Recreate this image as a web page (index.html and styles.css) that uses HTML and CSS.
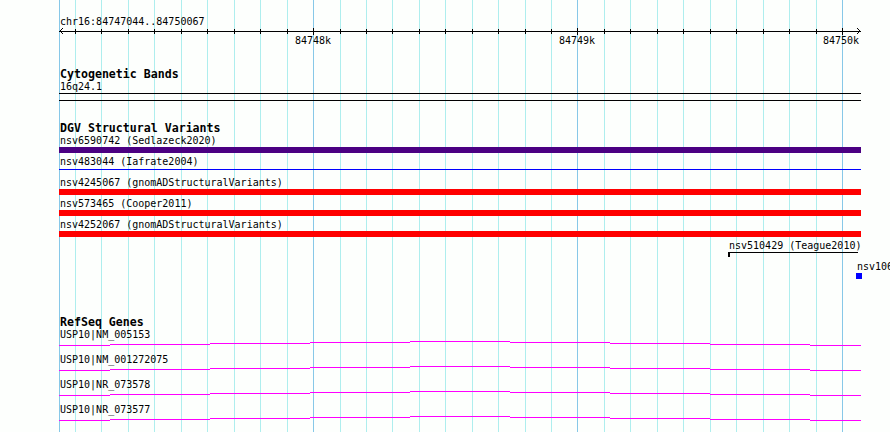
FILE: index.html
```html
<!DOCTYPE HTML>
<html lang="en-US">
<head>
	<meta charset="UTF-8" />
	<title>chr16:84747044..84750067</title>
	<link rel="stylesheet" href="styles.css">
</head>
<body>

	<svg class="grid" width="890" height="432" viewBox="0 0 890 432">
		<path class="grid-minor" d="M75.5 0V432M101.5 0V432M128.5 0V432M154.5 0V432M181.5 0V432M207.5 0V432M234.5 0V432M260.5 0V432M287.5 0V432M340.5 0V432M366.5 0V432M392.5 0V432M419.5 0V432M445.5 0V432M472.5 0V432M498.5 0V432M525.5 0V432M551.5 0V432M604.5 0V432M630.5 0V432M657.5 0V432M683.5 0V432M710.5 0V432M736.5 0V432M763.5 0V432M789.5 0V432M816.5 0V432" />
		<path class="grid-major" d="M59.5 0V432M313.5 0V432M577.5 0V432M842.5 0V432" />
	</svg>

	<svg class="ruler" width="890" height="48" viewBox="0 0 890 48">
		<text class="ruler-text" x="60" y="25">chr16:84747044..84750067</text>
		<path class="ruler-line" d="M59 31.5H861M63 28L60 31L63 34M857 28L860 31L857 34" />
		<path class="ruler-line" d="M75.5 29V34M101.5 29V34M128.5 29V34M154.5 29V34M181.5 29V34M207.5 29V34M234.5 29V34M260.5 29V34M287.5 29V34M340.5 29V34M366.5 29V34M392.5 29V34M419.5 29V34M445.5 29V34M472.5 29V34M498.5 29V34M525.5 29V34M551.5 29V34M604.5 29V34M630.5 29V34M657.5 29V34M683.5 29V34M710.5 29V34M736.5 29V34M763.5 29V34M789.5 29V34M816.5 29V34" />
		<path class="ruler-line" d="M313.5 28V35M577.5 28V35M842.5 28V35" />
		<text class="ruler-text" x="313" y="44" text-anchor="middle">84748k</text>
		<text class="ruler-text" x="577" y="44" text-anchor="middle">84749k</text>
		<text class="ruler-text" x="841" y="44" text-anchor="middle">84750k</text>
	</svg>

	<section class="track cyto">
		<h2 class="track-title">Cytogenetic Bands</h2>
		<div class="label">16q24.1</div>
		<div class="band"></div>
	</section>

	<section class="track dgv">
		<h2 class="track-title">DGV Structural Variants</h2>
		<div class="feature">
			<div class="label">nsv6590742 (Sedlazeck2020)</div>
			<div class="glyph bar-indigo"></div>
		</div>
		<div class="feature">
			<div class="label">nsv483044 (Iafrate2004)</div>
			<div class="glyph"><div class="stroke stroke-blue"></div></div>
		</div>
		<div class="feature">
			<div class="label">nsv4245067 (gnomADStructuralVariants)</div>
			<div class="glyph bar-red"></div>
		</div>
		<div class="feature">
			<div class="label">nsv573465 (Cooper2011)</div>
			<div class="glyph bar-red"></div>
		</div>
		<div class="feature">
			<div class="label">nsv4252067 (gnomADStructuralVariants)</div>
			<div class="glyph bar-red"></div>
		</div>
		<div class="feature" style="margin-left:669px;width:130px">
			<div class="label">nsv510429 (Teague2010)</div>
			<div class="glyph"><div class="end-tick"><div class="stroke"></div></div></div>
		</div>
		<div class="feature" style="margin-left:797px;width:6px">
			<div class="label">nsv106</div>
			<div class="glyph bar-blue"></div>
		</div>
	</section>

	<section class="track refseq">
		<h2 class="track-title">RefSeq Genes</h2>
		<div class="gene">
			<div class="label">USP10|NM_005153</div>
			<svg class="gene-line" width="802" height="14" viewBox="0 0 802 14"><path d="M0 5.5H51M51 4.5H151M151 3.5H251M251 2.5H351M351 1.5H451M451 2.5H551M551 3.5H651M651 4.5H751M751 5.5H802" /></svg>
		</div>
		<div class="gene">
			<div class="label">USP10|NM_001272075</div>
			<svg class="gene-line" width="802" height="14" viewBox="0 0 802 14"><path d="M0 5.5H51M51 4.5H151M151 3.5H251M251 2.5H351M351 1.5H451M451 2.5H551M551 3.5H651M651 4.5H751M751 5.5H802" /></svg>
		</div>
		<div class="gene">
			<div class="label">USP10|NR_073578</div>
			<svg class="gene-line" width="802" height="14" viewBox="0 0 802 14"><path d="M0 5.5H51M51 4.5H151M151 3.5H251M251 2.5H351M351 1.5H451M451 2.5H551M551 3.5H651M651 4.5H751M751 5.5H802" /></svg>
		</div>
		<div class="gene">
			<div class="label">USP10|NR_073577</div>
			<svg class="gene-line" width="802" height="14" viewBox="0 0 802 14"><path d="M0 5.5H51M51 4.5H151M151 3.5H251M251 2.5H351M351 1.5H451M451 2.5H551M551 3.5H651M651 4.5H751M751 5.5H802" /></svg>
		</div>
	</section>

</body>
</html>
```

FILE: styles.css
```css
* {
	margin: 0;
	padding: 0;
}
html,
body {
	overflow: hidden;
}
body {
	background-color: #fdfffd;
	color: #000;
	font-family: "DejaVu Sans Mono", "Liberation Mono", monospace;
	font-size: 10px;
	height: 432px;
	width: 890px;
}
.grid {
	left: 0;
	position: absolute;
	top: 0;
	z-index: -1;
}
.grid path {
	fill: none;
	shape-rendering: crispEdges;
	stroke-width: 1;
}
.grid-minor {
	stroke: #aeeeee;
}
.grid-major {
	stroke: #87c8e8;
}
.ruler {
	display: block;
}
.ruler-text {
	fill: #000;
	font-family: "DejaVu Sans Mono", "Liberation Mono", monospace;
	font-size: 10px;
}
.ruler-line {
	fill: none;
	shape-rendering: crispEdges;
	stroke: #000;
	stroke-width: 1;
}
.track {
	padding-left: 59px;
	width: 802px;
}
.track-title {
	font-size: 11.6px;
	font-weight: bold;
	line-height: 14px;
	padding-left: 1px;
}
.cyto {
	margin-top: 19px;
}
.dgv {
	margin-top: 20px;
}
.refseq {
	margin-top: 33px;
}
.label {
	line-height: 11px;
	padding-left: 1px;
	white-space: nowrap;
}
.band {
	border-bottom: 1px solid #000;
	border-top: 1px solid #000;
	height: 6px;
	margin-top: 1px;
}
.feature {
	height: 21px;
}
.glyph {
	height: 6px;
	margin-top: 1px;
}
.bar-indigo {
	background-color: #4b0082;
}
.bar-red {
	background-color: #ff0000;
}
.bar-blue {
	background-color: #0000ff;
}
.stroke {
	background-color: #000;
	height: 1px;
	margin-top: 2px;
}
.stroke-blue {
	background-color: #0000ff;
}
.end-tick {
	border-left: 2px solid #000;
	height: 5px;
	margin-top: 1px;
}
.end-tick .stroke {
	margin-top: 1px;
}
.gene {
	height: 25px;
}
.gene-line {
	display: block;
}
.gene-line path {
	fill: none;
	shape-rendering: crispEdges;
	stroke: #ff00ff;
	stroke-width: 1;
}
```
